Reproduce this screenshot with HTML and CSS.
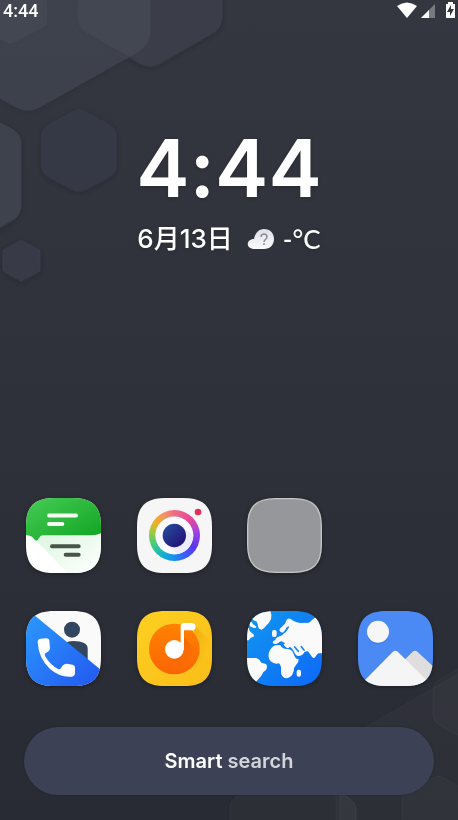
FILE: index.html
```html
<!DOCTYPE html>
<html lang="en">
<head>
<meta charset="utf-8">
<meta name="viewport" content="width=device-width, initial-scale=1">
<title>Home</title>
<link rel="stylesheet" href="styles.css">
</head>
<body>
<svg class="wallpaper" viewBox="0 0 458 820" preserveAspectRatio="xMidYMid slice" aria-hidden="true">
  <defs>
    <filter id="soft" x="-20%" y="-20%" width="140%" height="140%"><feDropShadow dx="0" dy="2" stdDeviation="3" flood-color="#1d1e28" flood-opacity=".25"/></filter>
    <linearGradient id="base" x1="0" y1="0" x2="0" y2="1"><stop offset="0" stop-color="#343740"/><stop offset=".6" stop-color="#2e3039"/><stop offset="1" stop-color="#282b33"/></linearGradient>
  </defs>
  <rect width="458" height="820" fill="url(#base)"/>
  <g filter="url(#soft)" stroke-width="1" stroke="#fff" stroke-opacity=".02">
    <path fill="#3b3e48" d="M78-5V18Q78 27 86 32L140 63Q150 69 160 63L214 32Q222 27 222 18V-5Z"/>
    <path fill="#4e525f" fill-opacity=".4" d="M-5 96L16 107Q28 114 40 107L136 53Q150 45 150 32V-5H-5Z"/>
    <path fill="#484c57" fill-opacity=".5" d="M-5 36L6 42Q10 44 14 42L43 27Q47 25 47 20V-5H-5Z"/>
    <path fill="#3e424d" d="M-5 120L12 129Q21 134 21 143V206Q21 215 13 220L-5 230Z"/>
    <path fill="#363944" d="M72 112Q79 108 86 112L110 125Q116 129 116 136V166Q116 173 110 176L86 189Q79 192 72 189L48 176Q42 173 42 166V136Q42 129 48 125Z"/>
    <path fill="#383b46" d="M21 240L40 250V271L21 281L3 271V250Z"/>
  </g>
  <g fill="#fff" fill-opacity=".022" stroke="#fff" stroke-opacity=".03">
    <path d="M340 742L465 670V830H340Z"/>
    <path d="M465 665L439 680Q433 684 433 691V715Q433 721 439 725L465 739Z"/>
    <path d="M402 825V799Q402 793 408 790L435 777Q439 775 444 778L465 790V825Z"/>
    <path d="M230 825V807Q230 801 236 797L254 787H330L350 799Q356 803 356 810V825Z"/>
    <path d="M336 787V825H356V810Q356 803 350 799Z"/>
  </g>
</svg>
<svg class="defs" width="0" height="0" aria-hidden="true">
  <defs>
    <clipPath id="tile"><path d="M0 85C0 25 25 0 85 0H140C200 0 225 25 225 85V140C225 200 200 225 140 225H85C25 225 0 200 0 140Z"/></clipPath>
    <linearGradient id="green" x1="0" y1="0" x2="1" y2="1"><stop stop-color="#46cc55"/><stop offset="1" stop-color="#10a322"/></linearGradient>
    <linearGradient id="mint" x1="0" y1="0" x2="1" y2="1"><stop stop-color="#dcf6e0"/><stop offset="1" stop-color="#fff"/></linearGradient>
    <linearGradient id="blue" x1="0" y1="0" x2="1" y2="1"><stop stop-color="#2b9cff"/><stop offset="1" stop-color="#2356ef"/></linearGradient>
    <linearGradient id="sea" x1="0" y1="0" x2="1" y2="1"><stop stop-color="#1097ef"/><stop offset="1" stop-color="#0e68f8"/></linearGradient>
    <linearGradient id="gold" x1="0" y1="0" x2="1" y2="1"><stop stop-color="#fdd022"/><stop offset="1" stop-color="#fabd19"/></linearGradient>
    <linearGradient id="orange" x1="0" y1="0" x2="0" y2="1"><stop stop-color="#ff8200"/><stop offset="1" stop-color="#fb6505"/></linearGradient>
    <linearGradient id="goldshade" x1="0" y1="0" x2="1" y2="1"><stop stop-color="#f0ab10"/><stop offset=".7" stop-color="#f0ab10" stop-opacity="0"/></linearGradient>
    <linearGradient id="noteshade" x1="0" y1="0" x2="1" y2="1"><stop offset=".2" stop-color="#e65500" stop-opacity=".6"/><stop offset=".7" stop-color="#e65500" stop-opacity="0"/></linearGradient>
    <linearGradient id="lens" x1="0" y1="0" x2="1" y2="1"><stop stop-color="#24519e"/><stop offset="1" stop-color="#240873"/></linearGradient>
    <linearGradient id="cloud" x1="0" y1="0" x2="0" y2="1"><stop stop-color="#dfe1e8"/><stop offset="1" stop-color="#fafafc"/></linearGradient>
  </defs>
</svg>

<div class="screen">
  <header class="status">
    <span>4:44</span>
    <svg width="60" height="20" viewBox="0 0 60 20" role="img" aria-label="Wi-Fi, signal, battery charging">
      <path fill="#fff" d="M0 5Q10-2 20 5L10 17Z"/>
      <path fill="#777a82" d="M38 3V17H24Z"/><path fill="#fff" d="M32 9V17H24Z"/>
      <path fill="#fff" d="M51 1H56V3H58V17H49V3H51Z"/><path fill="#34363f" d="M54 4L50 11H53V15L57 8H54Z"/>
    </svg>
  </header>

  <main class="home">
    <section class="clock">
      <time class="time">4:44</time>
      <div class="info">
        <span class="date">6月13日</span>
        <svg class="weather" width="28" height="22" viewBox="0 0 28 22" role="img" aria-label="Unknown weather">
          <path fill="url(#cloud)" d="M8 21C-2 21-1 11 7 11C8 5 12 1 17 1C23 1 27 5 27 11C27 17 23 21 17 21Z"/>
          <path fill="none" stroke="#8b8c98" stroke-width="1.5" d="M14 9Q14 6 17 6Q20 6 20 9Q20 10 18 12Q17 13 17 14"/><circle cx="17" cy="16" r="1" fill="#8b8c98"/>
        </svg>
        <span class="temp">-°C</span>
      </div>
    </section>

    <nav class="apps" aria-label="Apps">
      <button class="app" aria-label="Messages"><svg viewBox="0 0 225 225"><g clip-path="url(#tile)"><g transform="translate(-33 -39)">
        <rect x="33" y="39" width="225" height="225" fill="#fff"/>
        <path fill="url(#mint)" d="M66 170L82 150H258V264H158Z"/>
        <path fill="url(#green)" d="M33 39H258V145Q245 151 230 151H84Q77 151 73 158L68 165Q64 169 60 165L52 156Q46 151 33 150Z"/>
        <g stroke-width="12" stroke-linecap="round"><path stroke="#f4fbf4" d="M102 91.500H183M102 117H142"/><path stroke="#465648" d="M111 183.500H191M152 209H191"/></g>
      </g></g></svg></button>
      <button class="app" aria-label="Camera"><svg viewBox="0 0 225 225"><g clip-path="url(#tile)">
        <rect width="225" height="225" fill="#f6f6f7"/>
        <foreignObject x="36" y="36" width="153" height="153"><div class="ring"></div></foreignObject>
        <circle cx="112" cy="112.500" r="57" fill="#fbfbff"/><path fill="#ededfb" d="M88 137L122 168Q164 158 169 112L137 88Z"/>
        <circle cx="112" cy="112.500" r="35" fill="url(#lens)"/><circle cx="183" cy="42" r="10" fill="#e62e5c"/>
      </g></svg></button>
      <button class="app" aria-label="Folder"><svg viewBox="0 0 225 225"><path fill="#96979a" stroke="#c5c5c8" stroke-width="4" d="M2 85C2 27 27 2 85 2H140C198 2 223 27 223 85V140C223 198 198 223 140 223H85C27 223 2 198 2 140Z"/></svg></button>
      <button class="app second" aria-label="Phone"><svg viewBox="0 0 225 225"><g clip-path="url(#tile)"><g transform="translate(-33 -30)">
        <rect x="33" y="30" width="225" height="225" fill="#fafafb"/>
        <circle cx="171" cy="86" r="24" fill="#32475f"/><path fill="#32475f" d="M150 127Q160 120 174 120Q218 121 218 142V190Z"/>
        <path fill="url(#blue)" d="M33 22L258 207V260H33Z"/>
        <path fill="#fff" d="M68 123Q68 114 77 113L94 112Q103 112 103 121L105 141Q105 148 99 152L91 157Q88 160 90 165Q105 191 129 204Q133 206 136 203L144 193Q148 188 155 188L173 191Q180 193 180 200V217Q180 226 170 227Q135 230 105 204Q70 171 68 123Z"/>
      </g></g></svg></button>
      <button class="app second" aria-label="Music"><svg viewBox="0 0 225 225"><g clip-path="url(#tile)"><g transform="translate(-36 -30)">
        <rect x="36" y="30" width="225" height="225" fill="url(#gold)"/>
        <path fill="url(#goldshade)" d="M208 72L261 125V190L205 195Z"/><circle cx="148" cy="144" r="76" fill="url(#orange)"/>
        <path fill="url(#noteshade)" d="M130 165L170 203Q205 188 220 153L177 110V146Z"/>
        <circle cx="148" cy="145" r="28" fill="#fff"/><path fill="#fff" d="M167 146V77Q167 66 178 66H201Q212 67 212 77Q212 88 201 88H177V146Z"/>
      </g></g></svg></button>
      <button class="app second" aria-label="Browser"><svg viewBox="0 0 225 225"><g clip-path="url(#tile)"><g transform="translate(-36 -30)">
        <rect x="36" y="30" width="225" height="225" fill="url(#sea)"/>
        <g fill="#fafafb">
          <path d="M66 30H106Q112 43 108 55Q103 66 95 72Q88 82 80 86Q71 86 69 76Q69 68 64 61Q53 59 51 51Q53 42 66 38Z"/>
          <path d="M42 65Q49 59 52 66Q52 71 57 71L64 77Q63 83 55 80L45 76Z"/>
          <path d="M30 76L42 81Q42 91 51 96Q60 102 55 108Q45 109 42 118H30Z"/>
          <path d="M30 171H64Q75 175 79 185L93 189Q99 197 93 207Q82 213 79 224L65 240L50 262H30Z"/>
          <rect x="111" y="87" width="14" height="21" rx="6"/>
          <path d="M133 88Q133 83 140 78L150 68L155 56Q164 48 172 58Q182 65 195 66L222 65L232 56L242 48L270 75V157L250 157Q243 163 239 170Q234 174 229 165L219 151Q212 151 208 154Q204 163 192 165Q185 166 181 160L174 147Q169 137 163 138Q160 145 153 139L145 131L150 127L144 123Q137 118 130 126Q120 132 114 127Q111 120 120 118Q124 108 136 105Q142 105 147 97Q154 94 159 84Q163 80 161 75Q154 78 150 88L145 94Q138 97 133 88Z"/>
          <path d="M112 138Q119 131 132 132Q138 132 140 139Q147 145 158 144Q169 145 172 151L180 168Q182 174 191 175Q192 184 183 192Q177 198 176 210Q173 224 163 229Q151 236 142 226Q137 219 138 209Q140 195 132 187Q118 191 107 181Q99 173 101 157Q104 146 112 138Z"/>
          <rect x="185" y="206" width="13" height="21" rx="6"/>
        </g><path fill="none" stroke="#108af2" stroke-width="5" stroke-linecap="round" d="M179 138L190 151M199 137L207 147"/>
      </g></g></svg></button>
      <button class="app second" aria-label="Gallery"><svg viewBox="0 0 225 225"><g clip-path="url(#tile)"><g transform="translate(-39 -30)">
        <rect x="39" y="30" width="225" height="225" fill="#4b89f4"/>
        <circle cx="99" cy="97" r="33" fill="#356fd5" opacity=".45"/><circle cx="99" cy="92" r="33" fill="#f6f6f6"/>
        <path fill="#dedede" d="M175 180L202 153Q210 146 218 153L270 201V260H210Z"/>
        <path fill="#f5f5f5" d="M55 242L143 153Q151 146 159 153L250 242V262H55Z"/>
      </g></g></svg></button>
    </nav>

    <button class="search"><span>Smart <span class="dim">search</span></span></button>
  </main>
</div>
</body>
</html>
```
FILE: styles.css
```css
* { box-sizing: border-box; }
body {
  margin: 0;
  background: #2e3039;
  color: #fff;
  font-family: Inter, "Noto Sans CJK SC", sans-serif;
}
button {
  padding: 0;
  border: 0;
  background: none;
  color: inherit;
  font: inherit;
  cursor: pointer;
}
svg { display: block; }
.wallpaper {
  position: fixed;
  inset: 0;
  width: 100%;
  height: 100%;
  z-index: -1;
}
.defs { position: absolute; }
.screen {
  min-height: 100vh;
  display: flex;
  flex-direction: column;
}
.status {
  display: flex;
  justify-content: space-between;
  align-items: center;
  height: 22px;
  padding: 0 1px 0 3px;
  font: 500 18px/22px Roboto, sans-serif;
}
.home {
  flex: 1;
  display: flex;
  flex-direction: column;
  padding: 97px 24px 25px;
}
.clock {
  display: flex;
  flex-direction: column;
  align-items: center;
  text-shadow: 0 1px 4px rgba(0, 0, 0, .2);
}
.time {
  font-size: 80px;
  line-height: 98px;
  font-weight: 600;
  font-feature-settings: "calt" 0;
}
.info {
  display: flex;
  align-items: center;
  gap: 14px;
  line-height: 44px;
}
.date {
  font-size: 26px;
  font-weight: 500;
}
.temp {
  margin-left: -6px;
  font-family: Lato, sans-serif;
  font-size: 26px;
  font-weight: 500;
}
.apps {
  display: grid;
  grid-template-columns: repeat(4, 75px);
  justify-content: space-between;
  row-gap: 38px;
  margin-top: auto;
  padding: 0 1px 0 2px;
}
.app {
  height: 75px;
  filter: drop-shadow(0 1px 2px rgba(0, 0, 0, .35));
}
.app.second:nth-child(4) { grid-column: 1; }
.ring {
  width: 153px;
  height: 153px;
  border-radius: 50%;
  background: conic-gradient(#ed6d83, #e4479b 45deg, #a342e0 80deg, #5736f0 120deg, #3c5cf5 150deg, #139af0 190deg, #13b5c5 215deg, #48ce78 250deg, #a5c73e 280deg, #f1b022 305deg, #f0916a 335deg, #ed6d83);
}
.search {
  height: 68px;
  margin-top: 41px;
  border-radius: 34px;
  background: #3d4155;
  box-shadow: 0 0 2px rgba(0, 0, 0, .3);
  font-size: 20px;
  font-weight: 600;
}
.dim { color: #d3d5da; }
```
